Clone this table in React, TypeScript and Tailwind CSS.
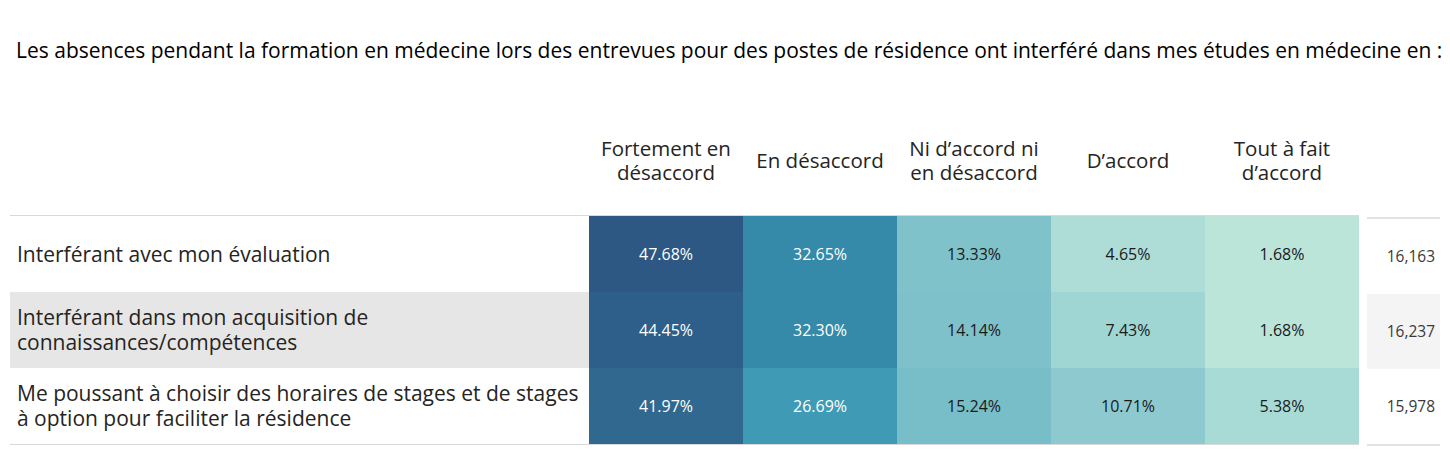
const columns = [
  'Fortement en désaccord',
  'En désaccord',
  'Ni d’accord ni en désaccord',
  'D’accord',
  'Tout à fait d’accord',
]

interface Cell {
  value: string
  bg: string
  light?: boolean
}

interface Row {
  label: string
  n: string
  shaded?: boolean
  cells: Cell[]
}

const rows: Row[] = [
  {
    label: 'Interférant avec mon évaluation',
    n: '16,163',
    cells: [
      { value: '47.68%', bg: 'bg-[#2c5883]', light: true },
      { value: '32.65%', bg: 'bg-[#3589a9]', light: true },
      { value: '13.33%', bg: 'bg-[#80c2ca]' },
      { value: '4.65%', bg: 'bg-[#aeddd7]' },
      { value: '1.68%', bg: 'bg-[#bce5da]' },
    ],
  },
  {
    label: 'Interférant dans mon acquisition de connaissances/compétences',
    n: '16,237',
    shaded: true,
    cells: [
      { value: '44.45%', bg: 'bg-[#2d5f8a]', light: true },
      { value: '32.30%', bg: 'bg-[#3589a9]', light: true },
      { value: '14.14%', bg: 'bg-[#7fc1ca]' },
      { value: '7.43%', bg: 'bg-[#9fd6d4]' },
      { value: '1.68%', bg: 'bg-[#bce5da]' },
    ],
  },
  {
    label: 'Me poussant à choisir des horaires de stages et de stages à option pour faciliter la résidence',
    n: '15,978',
    cells: [
      { value: '41.97%', bg: 'bg-[#30688f]', light: true },
      { value: '26.69%', bg: 'bg-[#3f9ab5]', light: true },
      { value: '15.24%', bg: 'bg-[#78bec8]' },
      { value: '10.71%', bg: 'bg-[#8dc9cf]' },
      { value: '5.38%', bg: 'bg-[#a9dbd6]' },
    ],
  },
]

export default function App() {
  return (
    <div className="w-[1450px] h-[453px] bg-white pt-[38px] font-['Open_Sans',sans-serif] text-[#1a1a1a] overflow-hidden">
      {/* Question */}
      <h1 className="pl-[16px] text-[21px] leading-[24px] whitespace-nowrap text-black">
        Les absences pendant la formation en médecine lors des entrevues pour des postes de résidence ont interféré dans mes études en médecine en :
      </h1>

      {/* Column headers */}
      <div className="mt-[53px] ml-[10px] flex h-[90px] items-center">
        <div className="w-[579px]" />
        {columns.map(c => (
          <div key={c} className="w-[154px] px-[6px] text-center text-[20.5px] leading-[24px] text-[#252423]">
            {c}
          </div>
        ))}
      </div>

      <div className="mt-[10px] ml-[10px] flex items-start gap-[8px]">
        {/* Main table */}
        <div className="w-[1349px] border-t border-b border-[#d9d9d9]">
          {rows.map(r => (
            <div key={r.n} className={`flex h-[76px] ${r.shaded ? 'bg-[#e6e6e6]' : 'bg-white'}`}>
              <div className="flex w-[579px] items-center pl-[7px] text-[21px] leading-[25px] text-[#252423]">
                {r.label}
              </div>
              {r.cells.map((c, i) => (
                <div
                  key={i}
                  className={`flex w-[154px] items-center justify-center text-[16px] ${c.bg} ${c.light ? 'text-white' : 'text-[#1a1a1a]'}`}
                >
                  {c.value}
                </div>
              ))}
            </div>
          ))}
        </div>

        {/* Respondent counts */}
        <div className="mt-[2px] w-[73px] border-t-2 border-b-2 border-[#e3e3e3]">
          {rows.map(r => (
            <div
              key={r.n}
              className={`flex h-[75px] items-center justify-end pr-[5px] text-[15.5px] text-[#3a3a3a] ${r.shaded ? 'bg-[#f4f4f4]' : 'bg-white'}`}
            >
              {r.n}
            </div>
          ))}
        </div>
      </div>
    </div>
  )
}
